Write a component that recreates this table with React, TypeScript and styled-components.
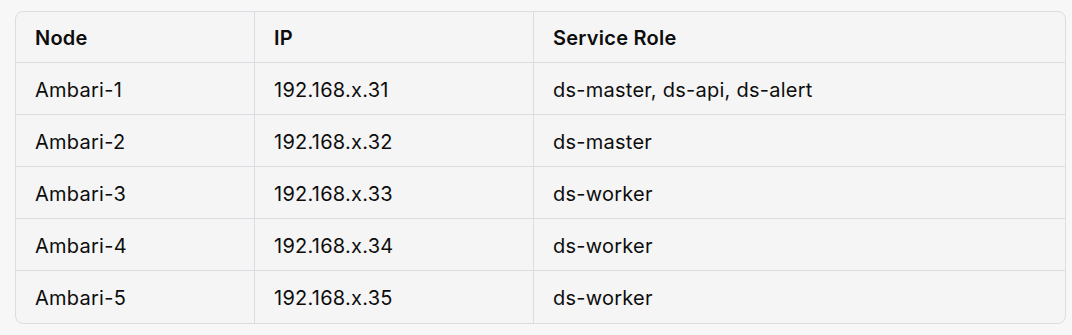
import * as React from 'react'
import styled, { createGlobalStyle } from 'styled-components'

const GlobalStyle = createGlobalStyle`
  body {
    margin: 0;
    background: #f7f7f7;
    font-family: Inter, "Noto Sans", sans-serif;
    color: #0d0d0d;
  }
`

const Page = styled.div`
  padding: 11px 6px 0 15px;
`

const Table = styled.div`
  display: grid;
  grid-template-columns: 239px 279px 1fr;
  width: 1051px;
  box-sizing: border-box;
  border: 1px solid #dcdce3;
  border-radius: 8px;
  background: #f5f5f5;
  overflow: hidden;
`

const Cell = styled.div<{ $head?: boolean; $last?: boolean; $bottom?: boolean }>`
  box-sizing: border-box;
  height: ${p => (p.$head ? 51 : 52)}px;
  display: flex;
  align-items: center;
  padding: 2px 0 0 19px;
  font-size: 20px;
  letter-spacing: 0.25px;
  font-weight: ${p => (p.$head ? 600 : 400)};
  border-right: ${p => (p.$last ? 'none' : '1px solid #dcdce3')};
  border-bottom: ${p => (p.$bottom ? 'none' : '1px solid #dcdce3')};
`

const rows = [
  ['Ambari-1', '192.168.x.31', 'ds-master, ds-api, ds-alert'],
  ['Ambari-2', '192.168.x.32', 'ds-master'],
  ['Ambari-3', '192.168.x.33', 'ds-worker'],
  ['Ambari-4', '192.168.x.34', 'ds-worker'],
  ['Ambari-5', '192.168.x.35', 'ds-worker'],
]

export default function App() {
  return (
    <Page>
      <GlobalStyle />
      <Table>
        {['Node', 'IP', 'Service Role'].map((h, i) => (
          <Cell key={h} $head $last={i === 2}>{h}</Cell>
        ))}
        {rows.map((r, ri) =>
          r.map((c, ci) => (
            <Cell key={ri + '-' + ci} $last={ci === 2} $bottom={ri === rows.length - 1}>
              {c}
            </Cell>
          ))
        )}
      </Table>
    </Page>
  )
}
